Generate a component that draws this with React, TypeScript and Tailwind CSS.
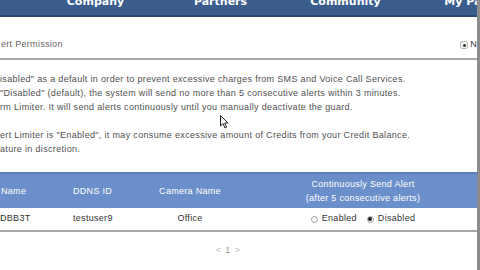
import React from "react"

const lines = [
  "isabled\" as a default in order to prevent excessive charges from SMS and Voice Call Services.",
  "\"Disabled\" (default), the system will send no more than 5 consecutive alerts within 3 minutes.",
  "rm Limiter. It will send alerts continuously until you manually deactivate the guard.",
  "",
  "ert Limiter is \"Enabled\", it may consume excessive amount of Credits from your Credit Balance.",
  "ature in discretion.",
]

function Radio({ checked }: { checked?: boolean }) {
  return (
    <span className="inline-flex items-center justify-center w-[7px] h-[7px] rounded-full border border-[#9a9a9a] bg-white mr-[4px]">
      {checked && <span className="w-[4px] h-[4px] rounded-full bg-[#222]"></span>}
    </span>
  )
}

export default function App() {
  return (
    <div className="relative w-[480px] h-[270px] overflow-hidden bg-white border-r-[3px] border-[#8c8c8c] font-['Liberation_Sans',Arial,sans-serif] tracking-[0.3px]">
      {/* Top nav */}
      <div className="h-[17px] bg-[#3b5d8d] border-b-2 border-[#2c4872] overflow-hidden">
        <div className="flex pl-[33px] -mt-[4px] font-['DejaVu_Sans',Verdana,sans-serif] font-bold text-[11px] leading-none tracking-normal text-white whitespace-nowrap">
          <div className="w-[125px] shrink-0 text-center">Company</div>
          <div className="w-[125px] shrink-0 text-center">Partners</div>
          <div className="w-[125px] shrink-0 text-center">Community</div>
          <div className="w-[125px] shrink-0 text-center">My Page</div>
        </div>
      </div>

      {/* Section title */}
      <div className="h-[41px] pt-[15px] flex items-center justify-between text-[9px] text-[#6b6262]">
        <span className="pl-[1px]">ert Permission</span>
        <span className="flex items-center gap-[2px]">
          <span className="w-[8px] h-[8px] rounded-[2px] border border-[#bbb] bg-[#f2f2f2] flex items-center justify-center">
            <span className="w-[3px] h-[3px] rounded-full bg-[#333]"></span>
          </span>
          <span className="text-[#333]">N</span>
        </span>
      </div>
      <div className="h-[2px] bg-[#a8a8a8]"></div>

      {/* Description */}
      <div className="pt-[12px] text-[9px] leading-[14px] tracking-[0.33px] text-[#505050] whitespace-nowrap">
        {lines.map((l, i) => (
          <div key={i} className="h-[14px]">{l}</div>
        ))}
      </div>

      {/* Table */}
      <div className="mt-[16px]">
        <div className="flex items-center h-[36px] bg-[#6b8fca] border-t-2 border-[#5a7db8] text-[9px] leading-[14px] text-white">
          <div className="w-[73px] shrink-0 pl-[1px]">Name</div>
          <div className="w-[77px] shrink-0">DDNS ID</div>
          <div className="w-[80px] shrink-0 text-center">Camera Name</div>
          <div className="w-[20px] shrink-0"></div>
          <div className="w-[226px] shrink-0 text-center">
            <div>Continuously Send Alert</div>
            <div>(after 5 consecutive alerts)</div>
          </div>
        </div>
        <div className="flex items-center h-[24px] text-[9px] text-[#333] border-b-2 border-[#a8a8a8]">
          <div className="w-[73px] shrink-0">DBB3T</div>
          <div className="w-[77px] shrink-0">testuser9</div>
          <div className="w-[80px] shrink-0 text-center">Office</div>
          <div className="w-[20px] shrink-0"></div>
          <div className="w-[226px] shrink-0 flex items-center justify-center gap-[10px]">
            <span className="flex items-center"><Radio />Enabled</span>
            <span className="flex items-center"><Radio checked />Disabled</span>
          </div>
        </div>
      </div>

      {/* Pagination */}
      <div className="flex justify-center mt-[12px] text-[9px] text-[#bbb] gap-[4px] w-[456px]">
        <span>&lt;</span>
        <span className="text-[#999]">1</span>
        <span>&gt;</span>
      </div>

      {/* Mouse cursor */}
      <svg className="absolute left-[220px] top-[115px]" width="9" height="14" viewBox="0 0 9 14">
        <path d="M0.5 0.5 L0.5 11 L3 8.6 L5 13 L6.6 12.3 L4.7 8 L8 8 Z" fill="white" stroke="#222" strokeWidth="1" />
      </svg>
    </div>
  )
}
